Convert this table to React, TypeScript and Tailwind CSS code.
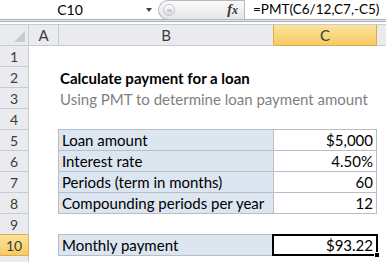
import type { ReactNode } from 'react';

// Excel-like column widths (px), borders included
const HEAD = 'bg-[#e9ebee] border-[#c8ccd2]';
const ACTIVE_HEAD = 'bg-gradient-to-b from-[#fbe39a] to-[#f5cb63] border-[#e3a94a]';
const TABLE_BORDER = 'border-[#b9bec6]';

function RowHead({ n, active }: { n?: number; active?: boolean }) {
  return (
    <div
      className={`w-[29px] shrink-0 h-full flex items-center justify-center border-r border-b text-[14px] text-[#3c3c3c] ${
        active ? ACTIVE_HEAD : HEAD
      }`}
    >
      {n}
    </div>
  );
}

function Row({ n, active, children }: { n?: number; active?: boolean; children?: ReactNode }) {
  return (
    <div className="flex h-[21px]">
      <RowHead n={n} active={active} />
      <div className="w-[29px] shrink-0" />
      {children}
    </div>
  );
}

function LabelCell({ children }: { children?: ReactNode }) {
  return (
    <div className={`w-[216px] shrink-0 h-full border-l border-r border-b ${TABLE_BORDER} bg-[#dce6f1] flex items-end pl-[3px] pb-[1px] leading-[18px] whitespace-nowrap`}>
      {children}
    </div>
  );
}

function ValueCell({ children }: { children?: ReactNode }) {
  return (
    <div className={`w-[103px] shrink-0 h-full border-r border-b ${TABLE_BORDER} bg-white flex items-end justify-end pr-[3px] pb-[1px] leading-[18px]`}>
      {children}
    </div>
  );
}

const inputs = [
  { n: 5, label: 'Loan amount', value: '$5,000' },
  { n: 6, label: 'Interest rate', value: '4.50%' },
  { n: 7, label: 'Periods (term in months)', value: '60' },
  { n: 8, label: 'Compounding periods per year', value: '12' },
];

export default function App() {
  return (
    <div className="w-[386px] h-[262px] overflow-hidden bg-white text-black font-['Lato',sans-serif] text-[15px]">
      {/* Formula bar */}
      <div className="flex h-[19px] items-center">
        <div className="w-[140px] shrink-0 text-center text-[14px] leading-[19px]">C10</div>
        <div className="w-[18px] shrink-0 flex justify-center">
          <div className="w-0 h-0 border-l-[3px] border-r-[3px] border-t-[4px] border-l-transparent border-r-transparent border-t-[#444]" />
        </div>
        <div className="w-[86px] shrink-0 h-[20px] -mb-px self-start flex items-center rounded-l-[10px] border border-r-0 border-[#b4b9c0] bg-gradient-to-b from-[#fafafa] to-[#e4e6e9]">
          <div className="ml-[4px] w-[12px] h-[12px] rounded-full border border-[#c3c6cb] bg-gradient-to-b from-[#ffffff] to-[#d9dbde] flex items-center justify-center">
            <div className="w-[5px] h-[3px] rounded-full bg-[#c9ccd0]" />
          </div>
          <span className="ml-auto mr-[6px] font-['Liberation_Serif',serif] italic font-bold text-[14px] text-[#333] leading-none">
            f<span className="text-[12px]">x</span>
          </span>
        </div>
        <div className="h-full border-l border-[#b4b9c0] pl-[8px] text-[13.5px] leading-[19px] whitespace-nowrap">
          =PMT(C6/12,C7,-C5)
        </div>
      </div>

      {/* separator band */}
      <div className="h-[3px] border-y border-[#a9afb7] bg-[#e3e6ea]" />
      <div className="h-[2px]" />

      {/* Column headers */}
      <div className={`flex h-[22px] border-t ${HEAD} text-[15px] text-[#3c3c3c]`}>
        <div className={`relative w-[29px] shrink-0 border-r border-b ${HEAD}`}>
          <svg className="absolute right-[3px] bottom-[3px]" width="11" height="11" viewBox="0 0 11 11">
            <polygon points="11,0 11,11 0,11" fill="#c7cacf" />
          </svg>
        </div>
        <div className={`w-[30px] shrink-0 border-r border-b ${HEAD} flex items-center justify-center`}>A</div>
        <div className={`w-[215px] shrink-0 border-r border-b ${HEAD} border-r-[#e3a94a] flex items-center justify-center`}>B</div>
        <div className={`w-[103px] shrink-0 border-r border-b ${ACTIVE_HEAD} flex items-center justify-center`}>C</div>
        <div className={`flex-1 border-b ${HEAD}`} />
      </div>

      <Row n={1} />
      <Row n={2}>
        <div className="w-[216px] shrink-0 flex items-end pl-[2px] pb-[1px] leading-[18px] font-bold whitespace-nowrap">
          Calculate payment for a loan
        </div>
      </Row>
      <Row n={3}>
        <div className="w-[319px] shrink-0 flex items-end pl-[2px] pb-[1px] leading-[18px] text-[#7f7f7f] whitespace-nowrap">
          Using PMT to determine loan payment amount
        </div>
      </Row>
      <Row n={4}>
        <div className={`w-[216px] shrink-0 border-b ${TABLE_BORDER}`} />
        <div className={`w-[103px] shrink-0 border-b ${TABLE_BORDER}`} />
      </Row>
      {inputs.map((r) => (
        <Row key={r.n} n={r.n}>
          <LabelCell>{r.label}</LabelCell>
          <ValueCell>{r.value}</ValueCell>
        </Row>
      ))}
      <div className="flex h-[21px]">
        <div className="w-[29px] shrink-0 h-full flex items-center justify-center border-r border-b text-[14px] text-[#3c3c3c] bg-[#e9ebee] border-r-[#c8ccd2] border-b-[#e3a94a]">
          9
        </div>
        <div className="w-[29px] shrink-0" />
        <div className={`w-[216px] shrink-0 border-b ${TABLE_BORDER}`} />
        <div className={`w-[103px] shrink-0 border-b ${TABLE_BORDER}`} />
      </div>
      <Row n={10} active>
        <LabelCell>Monthly payment</LabelCell>
        <div className={`relative w-[103px] shrink-0 h-full border-r border-b ${TABLE_BORDER} bg-white flex items-end justify-end pr-[3px] pb-[1px] leading-[18px]`}>
          $93.22
          {/* selection frame */}
          <div className="absolute -left-[2px] -top-[1px] -right-[2px] -bottom-[1px] border-2 border-black pointer-events-none" />
          <div className="absolute -right-[4px] -bottom-[3px] w-[6px] h-[6px] bg-black border border-white" />
        </div>
      </Row>
      <Row />
    </div>
  );
}
